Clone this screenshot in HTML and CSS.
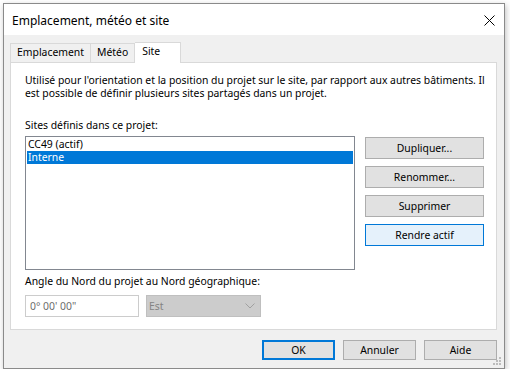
FILE: index.html
```html
<!DOCTYPE html>
<html lang="fr">
<head>
  <meta charset="UTF-8">
  <title>Emplacement, météo et site</title>
  <link rel="stylesheet" href="styles.css">
</head>
<body>
  <div class="window">
    <div class="titlebar">
      <span class="title">Emplacement, météo et site</span>
      <svg class="close" width="11" height="11" viewBox="0 0 11 11">
        <path d="M0.5 0.5 L10.5 10.5 M10.5 0.5 L0.5 10.5" stroke="#000" stroke-width="1" fill="none"/>
      </svg>
    </div>

    <div class="content">
      <!-- Onglets -->
      <div class="tabs">
        <div class="tab">Emplacement</div>
        <div class="tab">Météo</div>
        <div class="tab selected">Site</div>
      </div>

      <div class="panel">
        <p class="desc">Utilisé pour l'orientation et la position du projet sur le site, par rapport aux autres bâtiments. Il est possible de définir plusieurs sites partagés dans un projet.</p>

        <div class="label sites-label">Sites définis dans ce projet:</div>
        <div class="sites-row">
          <div class="listbox">
            <div class="item">CC49 (actif)</div>
            <div class="item active">Interne</div>
          </div>
          <div class="side-buttons">
            <button class="btn">Dupliquer...</button>
            <button class="btn">Renommer...</button>
            <button class="btn">Supprimer</button>
            <button class="btn focus">Rendre actif</button>
          </div>
        </div>

        <div class="label angle-label">Angle du Nord du projet au Nord géographique:</div>
        <div class="angle-row">
          <div class="field">0° 00' 00"</div>
          <div class="combo">
            <span>Est</span>
            <svg width="10" height="6" viewBox="0 0 10 6">
              <path d="M0.5 0.5 L5 5 L9.5 0.5" stroke="#a0a0a0" stroke-width="1" fill="none"/>
            </svg>
          </div>
        </div>
      </div>

      <div class="footer">
        <button class="btn default">OK</button>
        <button class="btn">Annuler</button>
        <button class="btn">Aide</button>
      </div>
    </div>

    <svg class="grip" width="8" height="8" viewBox="0 0 8 8">
      <rect x="6" y="0" width="2" height="2" fill="#bcbcbc"/>
      <rect x="3" y="3" width="2" height="2" fill="#bcbcbc"/>
      <rect x="6" y="3" width="2" height="2" fill="#bcbcbc"/>
      <rect x="0" y="6" width="2" height="2" fill="#bcbcbc"/>
      <rect x="3" y="6" width="2" height="2" fill="#bcbcbc"/>
      <rect x="6" y="6" width="2" height="2" fill="#bcbcbc"/>
    </svg>
  </div>
</body>
</html>
```

FILE: styles.css
```css
* {
  box-sizing: border-box;
}

body {
  margin: 0;
  background-color: #ffffff;
  font-family: "Noto Sans", "Open Sans", sans-serif;
  font-size: 10.4px;
  color: #000;
}

.window {
  position: relative;
  margin: 3px 0 0 3px;
  width: 502px;
  height: 366px;
  border: 1px solid #8a8a8a;
  background-color: #f0f0f0;
  box-shadow: 1px 2px 6px rgba(0, 0, 0, 0.25);
}

.titlebar {
  display: flex;
  align-items: center;
  justify-content: space-between;
  height: 31px;
  background-color: #ffffff;
  padding: 0 9px 0 8px;
}

.title {
  font-size: 12px;
  margin-top: 1px;
}

.close {
  display: block;
  margin-top: 1px;
}

.content {
  padding: 7px 7px 0 6px;
}

/* Onglets */
.tabs {
  display: flex;
  align-items: flex-end;
  height: 21px;
  margin-bottom: -1px;
  position: relative;
  z-index: 1;
}

.tab {
  height: 19px;
  margin-bottom: 1px;
  line-height: 17px;
  padding: 0 6px;
  border: 1px solid #d9d9d9;
  border-bottom: none;
  border-left: none;
  background-color: #f0f0f0;
}

.tab:first-child {
  border-left: 1px solid #d9d9d9;
}

.tab.selected {
  height: 21px;
  width: 46px;
  margin-bottom: 0;
  padding: 0 7px;
  line-height: 17px;
  background-color: #ffffff;
}

.panel {
  width: 487px;
  height: 268px;
  border: 1px solid #d9d9d9;
  background-color: #ffffff;
  padding: 11px 6px 0 14px;
}

.desc {
  margin: 0;
  line-height: 13px;
}

.label {
  line-height: 13px;
}

.sites-label {
  margin-top: 19px;
}

.sites-row {
  display: flex;
  margin-top: 4px;
}

.listbox {
  width: 330px;
  height: 134px;
  border: 1px solid #828790;
  padding: 1px;
  line-height: 13px;
}

.item {
  padding-left: 1px;
}

.item.active {
  background-color: #0078d7;
  color: #ffffff;
}

.side-buttons {
  display: flex;
  flex-direction: column;
  gap: 7px;
  margin: 1px 0 0 10px;
}

.btn {
  font-family: inherit;
  font-size: 10.4px;
  color: #000;
  background-color: #e1e1e1;
  border: 1px solid #adadad;
  border-radius: 0;
  padding: 0;
  margin: 0;
  width: 119px;
  height: 22px;
}

.btn.focus {
  background-color: #e5f1fb;
  border-color: #0078d7;
}

.angle-label {
  margin-top: 5px;
}

.angle-row {
  display: flex;
  gap: 7px;
  margin-top: 7px;
}

.field {
  width: 114px;
  height: 22px;
  line-height: 20px;
  padding-left: 4px;
  border: 1px solid #cccccc;
  color: #6d6d6d;
}

.combo {
  display: flex;
  align-items: center;
  justify-content: space-between;
  width: 115px;
  height: 22px;
  padding: 0 5px 0 2px;
  border: 1px solid #bfbfbf;
  background-color: #cccccc;
  color: #838383;
}

.footer {
  display: flex;
  justify-content: flex-end;
  gap: 8px;
  margin-top: 10px;
}

.footer .btn {
  width: 73px;
  height: 20px;
}

.footer .btn.default {
  border: 2px solid #0078d7;
}

.grip {
  position: absolute;
  right: 3px;
  bottom: 3px;
}
```
